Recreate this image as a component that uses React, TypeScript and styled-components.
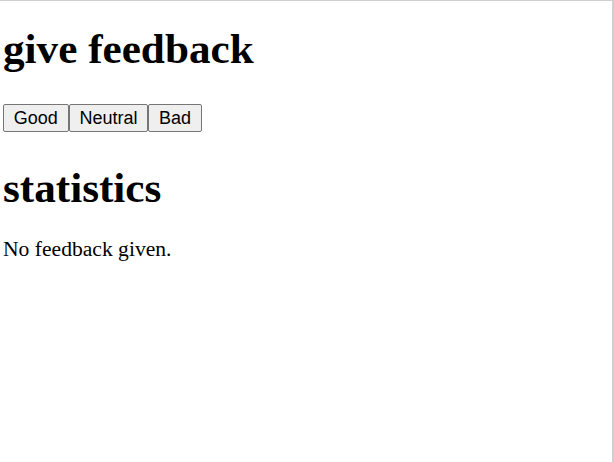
import React, { useState } from "react";
import styled, { createGlobalStyle } from "styled-components";

const GlobalStyle = createGlobalStyle`
    html, body {
        margin: 0;
        padding: 0;
        background: #ffffff;
    }
`;

const App = () => {
    const [good, setGood] = useState(0);
    const [neutral, setNeutral] = useState(0);
    const [bad, setBad] = useState(0);
    const total = good + neutral + bad;

    return (
        <>
            <GlobalStyle />
            <PageLayout>
                <Heading>give feedback</Heading>
                <ButtonRow>
                    <FeedbackButton onClick={() => setGood(good + 1)}>Good</FeedbackButton>
                    <FeedbackButton onClick={() => setNeutral(neutral + 1)}>Neutral</FeedbackButton>
                    <FeedbackButton onClick={() => setBad(bad + 1)}>Bad</FeedbackButton>
                </ButtonRow>
                <Heading>statistics</Heading>
                {total === 0 ? (
                    <Message>No feedback given.</Message>
                ) : (
                    <Message>
                        good {good} neutral {neutral} bad {bad}
                    </Message>
                )}
            </PageLayout>
        </>
    );
};

const PageLayout = styled.div`
    box-sizing: border-box;
    width: 614px;
    height: 462px;
    border-top: 1px solid #cfcfcf;
    border-right: 2px solid #cfcfcf;
    padding: 22.5px 0 0 3px;
    font-family: "Liberation Serif", "Times New Roman", serif;
    color: #000000;
    overflow: hidden;
`;

const Heading = styled.h1`
    font-size: 43.2px;
    font-weight: bold;
    line-height: 50px;
    margin: 0;
`;

const ButtonRow = styled.div`
    display: flex;
    margin: 30.5px 0 31px;
`;

const FeedbackButton = styled.button`
    box-sizing: border-box;
    height: 28px;
    padding: 0 9.8px;
    font-family: "Liberation Sans", Arial, sans-serif;
    font-size: 18px;
    color: #000000;
    background: #efefef;
    border: 1px solid #767676;
    border-radius: 2px;
    cursor: pointer;
`;

const Message = styled.p`
    font-size: 21.6px;
    line-height: 25px;
    margin: 23.5px 0;
`;

export default App;
